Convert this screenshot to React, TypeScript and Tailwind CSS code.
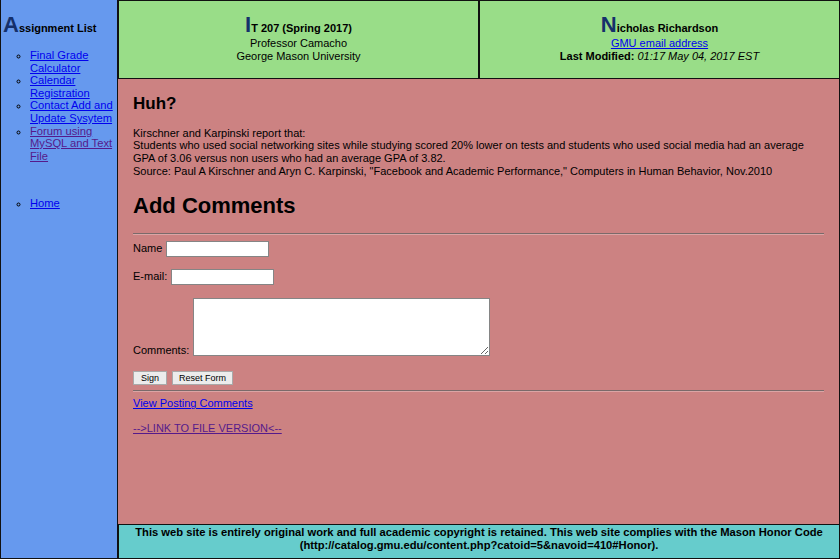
import React from "react";

const font = "font-['Liberation_Sans',Arial,sans-serif]";

export default function App() {
  return (
    <div className={`${font} flex h-[559px] w-[840px] overflow-hidden text-[11px] leading-[13px] text-black`}>
      {/* Sidebar */}
      <aside className="h-[559px] w-[118px] shrink-0 border-x border-b border-[#111] bg-[#6699ee] pt-[14px]">
        <div className="whitespace-nowrap pl-[2px] font-bold leading-[13px]">
          <span className="text-[22px] leading-[22px] text-[#15306b]">A</span>
          <span>ssignment List</span>
        </div>
        <ul className="mt-[13px] list-[circle] pl-[29px] text-[11.2px] leading-[12.6px]">
          <li><a href="#" className="text-[#0000ee] underline">Final Grade Calculator</a></li>
          <li><a href="#" className="text-[#0000ee] underline">Calendar Registration</a></li>
          <li><a href="#" className="text-[#0000ee] underline">Contact Add and Update Sysytem</a></li>
          <li><a href="#" className="text-[#551a8b] underline">Forum using MySQL and Text File</a></li>
        </ul>
        <ul className="mt-[35px] list-[circle] pl-[29px] text-[11.2px] leading-[12.6px]">
          <li><a href="#" className="text-[#0000ee] underline">Home</a></li>
        </ul>
      </aside>

      {/* Right column */}
      <div className="flex min-w-0 flex-1 flex-col">
        <header className="flex h-[79px] shrink-0">
          <div className="flex-1 border border-[#111] bg-[#99dd88] pt-[13px] text-center">
            <div className="font-bold">
              <span className="text-[22px] leading-[22px] text-[#15306b]">I</span>T 207 (Spring 2017)
            </div>
            <div className="mt-[1px]">Professor Camacho</div>
            <div>George Mason University</div>
          </div>
          <div className="flex-1 border border-[#111] bg-[#99dd88] pt-[13px] text-center">
            <div className="font-bold">
              <span className="text-[22px] leading-[22px] text-[#15306b]">N</span>icholas Richardson
            </div>
            <div className="mt-[1px]">
              <a href="#" className="text-[#0000ee] underline">GMU email address</a>
            </div>
            <div>
              <span className="font-bold">Last Modified:</span> <span className="italic">01:17 May 04, 2017 EST</span>
            </div>
          </div>
        </header>

        <main className="flex-1 border-r border-[#111] bg-[#cc8282] pl-[15px] pr-[15px] pt-[15px]">
          <h2 className="text-[17px] font-bold leading-[20px]">Huh?</h2>
          <div className="mt-[12.7px] leading-[12.67px]">
            <div>Kirschner and Karpinski report that:</div>
            <div>
              Students who used social networking sites while studying scored 20% lower on tests and students who used social media had an average GPA of 3.06 versus non users who had an average GPA of 3.82.
            </div>
            <div>
              Source: Paul A Kirschner and Aryn C. Karpinski, "Facebook and Academic Performance," Computers in Human Behavior, Nov.2010
            </div>
          </div>
          <h1 className="mt-[15.6px] text-[22px] font-bold leading-[26px]">Add Comments</h1>
          <hr className="mt-[14px] border-0 border-t border-b border-t-[#7a6a6a] border-b-[#dba5a5]" />

          <div className="mt-[6px] flex h-[16px] items-center gap-[4px]">
            <span>Name</span>
            <input type="text" className="h-[16px] w-[103px] border border-[#858585] bg-white outline-none" />
          </div>
          <div className="mt-[12px] flex h-[16px] items-center gap-[4px]">
            <span>E-mail:</span>
            <input type="text" className="h-[16px] w-[103px] border border-[#858585] bg-white outline-none" />
          </div>
          <div className="mt-[13px] flex items-end gap-[4px]">
            <span className="mb-[-1px]">Comments:</span>
            <textarea className="block h-[58px] w-[297px] border border-[#858585] bg-white outline-none" />
          </div>
          <div className="mt-[15px] flex gap-[5px]">
            <button className="h-[14px] border border-[#a9a9a9] bg-[#ececec] px-[7px] text-[9px] leading-[12px]">Sign</button>
            <button className="h-[14px] border border-[#a9a9a9] bg-[#ececec] px-[6px] text-[9px] leading-[12px]">Reset Form</button>
          </div>
          <hr className="mt-[5px] border-0 border-t border-b border-t-[#7a6a6a] border-b-[#dba5a5]" />
          <div className="mt-[5.5px]">
            <a href="#" className="text-[#0000ee] underline">View Posting Comments</a>
          </div>
          <div className="mt-[12px]">
            <a href="#" className="text-[#551a8b] underline">--&gt;LINK TO FILE VERSION&lt;--</a>
          </div>
        </main>

        <footer className="h-[35px] shrink-0 border border-[#111] bg-[#66cccc] pt-[1px] text-center text-[11.2px] font-bold">
          <div>This web site is entirely original work and full academic copyright is retained. This web site complies with the Mason Honor Code</div>
          <div>(http://catalog.gmu.edu/content.php?catoid=5&amp;navoid=410#Honor).</div>
        </footer>
      </div>
    </div>
  );
}
